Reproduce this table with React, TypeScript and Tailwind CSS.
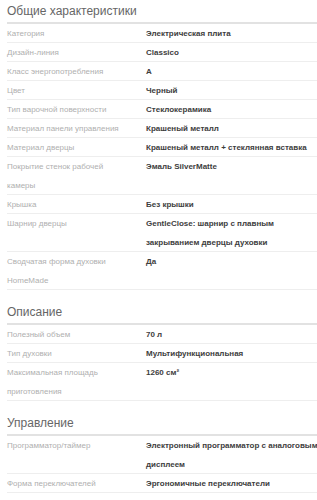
const sections: { title: string; rows: [string, string][] }[] = [
  {
    title: "Общие характеристики",
    rows: [
      ["Категория", "Электрическая плита"],
      ["Дизайн-линия", "Classico"],
      ["Класс энергопотребления", "A"],
      ["Цвет", "Черный"],
      ["Тип варочной поверхности", "Стеклокерамика"],
      ["Материал панели управления", "Крашеный металл"],
      ["Материал дверцы", "Крашеный металл + стеклянная вставка"],
      ["Покрытие стенок рабочей камеры", "Эмаль SilverMatte"],
      ["Крышка", "Без крышки"],
      ["Шарнир дверцы", "GentleClose: шарнир с плавным закрыванием дверцы духовки"],
      ["Сводчатая форма духовки HomeMade", "Да"],
    ],
  },
  {
    title: "Описание",
    rows: [
      ["Полезный объем", "70 л"],
      ["Тип духовки", "Мультифункциональная"],
      ["Максимальная площадь приготовления", "1260 см²"],
    ],
  },
  {
    title: "Управление",
    rows: [
      ["Программатор/таймер", "Электронный программатор с аналоговым дисплеем"],
      ["Форма переключателей", "Эргономичные переключатели"],
    ],
  },
];

export default function App() {
  return (
    <div
      className="w-[317px] h-[500px] overflow-hidden bg-white pl-[7px]"
      style={{ fontFamily: '"Liberation Sans", Arial, sans-serif' }}
    >
      {sections.map((s, i) => (
        <div key={s.title} className={i === 0 ? "pt-[3px]" : "pt-[14px]"}>
          <h3 className="text-[12px] leading-[17px] pb-[2px] text-[#666] font-normal border-b-2 border-[#e2e2e2] w-[330px]">
            {s.title}
          </h3>
          <div className="w-[330px]">
            {s.rows.map(([label, value]) => (
              <div
                key={label}
                className="flex shadow-[inset_0_-1px_0_#eeeeee] text-[8px] leading-[19px]"
              >
                <div className="w-[139px] shrink-0 pr-[14px] text-[#afafaf]">{label}</div>
                <div className="w-[176px] font-bold text-[#3d3d3d]">{value}</div>
              </div>
            ))}
          </div>
        </div>
      ))}
    </div>
  );
}
